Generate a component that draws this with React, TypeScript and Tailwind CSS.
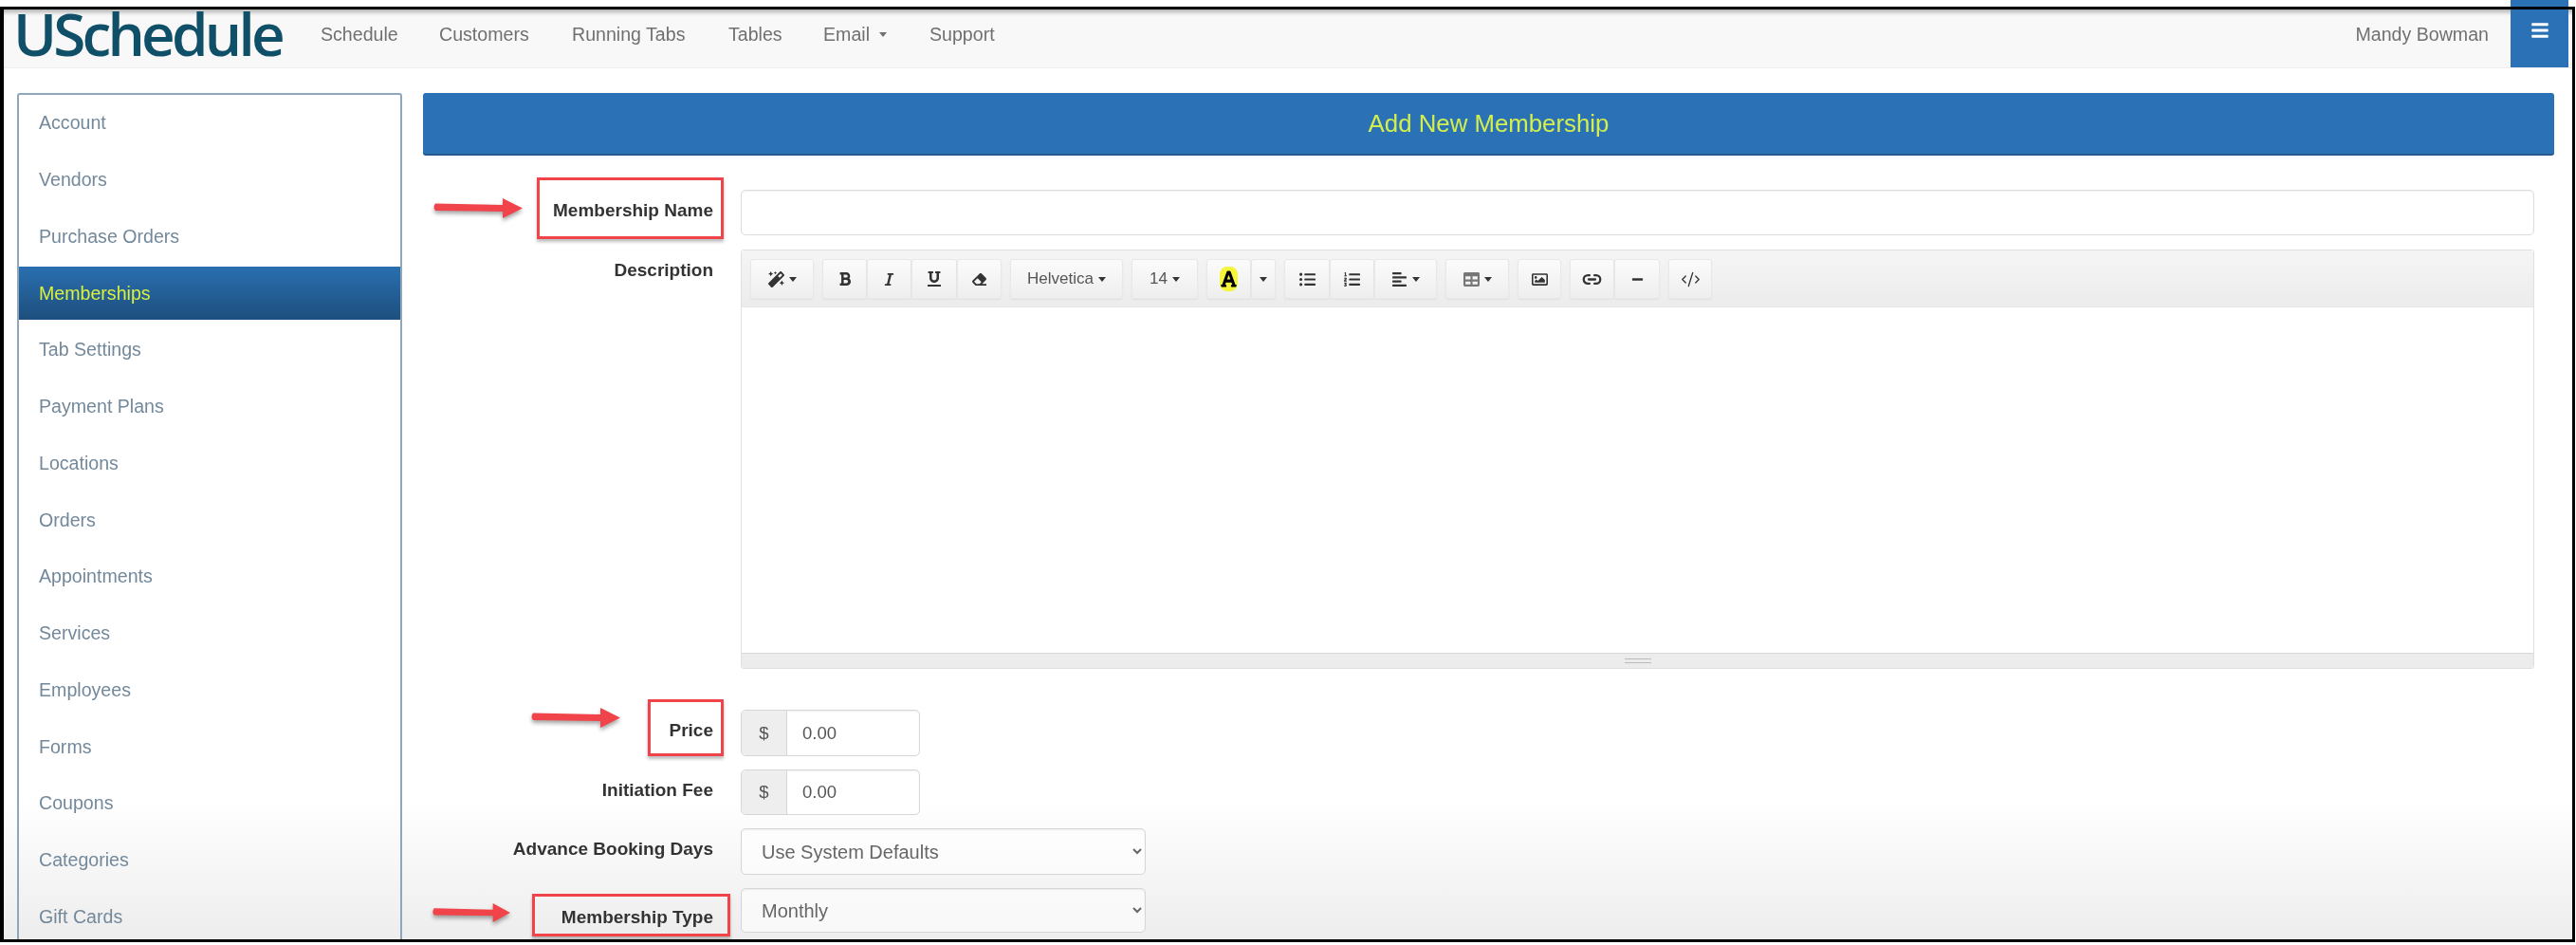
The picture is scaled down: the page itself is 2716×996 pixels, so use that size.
import React from 'react';
import { Link2, CodeXml } from 'lucide-react';
import {
  FaMagic, FaBold, FaItalic, FaUnderline, FaEraser, FaFont, FaListUl, FaListOl,
  FaAlignLeft, FaTable, FaRegImage, FaMinus, FaBars,
} from 'react-icons/fa';

const sans = "font-['Liberation_Sans',Arial,sans-serif]";

const navLinks = [
  { label: 'Schedule', cls: 'w-[125px]' },
  { label: 'Customers', cls: 'w-[140px]' },
  { label: 'Running Tabs', cls: 'w-[165px]' },
  { label: 'Tables', cls: 'w-[100px]' },
  { label: 'Email', cls: 'w-[112px]', caret: true },
  { label: 'Support', cls: 'w-[100px]' },
];

const sideItems = [
  'Account', 'Vendors', 'Purchase Orders', 'Memberships', 'Tab Settings', 'Payment Plans', 'Locations', 'Orders',
  'Appointments', 'Services', 'Employees', 'Forms', 'Coupons', 'Categories', 'Gift Cards',
];

function Caret() {
  return <span className="inline-block w-0 h-0 border-x-[4px] border-x-transparent border-t-[5px] border-t-current" />;
}

function Btn({ w, children }: { w: string; children: React.ReactNode }) {
  return (
    <div className={`${w} h-full flex items-center justify-center gap-[5px] text-[#333] bg-gradient-to-b from-[#fbfbfb] to-[#eeeeee] border border-[#e8e8e8] rounded-[3px] shadow-[0_1px_2px_rgba(0,0,0,0.06)]`}>
      {children}
    </div>
  );
}

function Toolbar() {
  return (
    <div className="h-[60px] flex gap-[9px] pl-[9px] pt-[9px] pb-[8px] bg-gradient-to-b from-[#f5f5f5] to-[#ececec] border-b border-[#e6e6e6]">
      <Btn w="w-[67px]"><FaMagic size={17} /><Caret /></Btn>
      <div className="flex">
        <Btn w="w-[47px]"><FaBold size={16} /></Btn>
        <Btn w="w-[47px]"><FaItalic size={15} /></Btn>
        <Btn w="w-[48px]"><FaUnderline size={16} /></Btn>
        <Btn w="w-[47px]"><FaEraser size={15} /></Btn>
      </div>
      <Btn w="w-[119px]"><span className="text-[17px] text-[#555]">Helvetica</span><Caret /></Btn>
      <Btn w="w-[70px]"><span className="text-[17px] text-[#555]">14</span><Caret /></Btn>
      <div className="flex">
        <Btn w="w-[47px]"><FaFont className="bg-[#f5f53c] rounded-[8px] px-[1px] w-[19px] h-[26px] text-black" /></Btn>
        <Btn w="w-[26px]"><Caret /></Btn>
      </div>
      <div className="flex">
        <Btn w="w-[48px]"><FaListUl size={17} /></Btn>
        <Btn w="w-[47px]"><FaListOl size={17} /></Btn>
        <Btn w="w-[66px]"><FaAlignLeft size={17} /><Caret /></Btn>
      </div>
      <Btn w="w-[67px]"><FaTable size={17} className="text-[#777]" /><Caret /></Btn>
      <Btn w="w-[46px]"><FaRegImage size={17} /></Btn>
      <div className="flex">
        <Btn w="w-[47px]"><Link2 size={21} strokeWidth={2.6} /></Btn>
        <Btn w="w-[48px]"><FaMinus size={13} /></Btn>
      </div>
      <Btn w="w-[46px]"><CodeXml size={21} strokeWidth={1.5} /></Btn>
    </div>
  );
}

function Row({ label, mt, labelPt, children }: { label: string; mt: string; labelPt: string; children: React.ReactNode }) {
  return (
    <div className={`flex ${mt}`}>
      <label className={`w-[306px] ${labelPt} text-right text-[19px] leading-[26px] font-bold text-[#333]`}>{label}</label>
      <div className="flex-1 ml-[29px]">{children}</div>
    </div>
  );
}

function Money({ h }: { h: string }) {
  return (
    <div className={`flex ${h} w-[189px] border border-[#d6d6d6] rounded-[5px] overflow-hidden bg-white shadow-[inset_0_1px_2px_rgba(0,0,0,0.06)]`}>
      <span className="w-[48px] flex items-center justify-center bg-[#eeeeee] border-r border-[#d6d6d6] text-[18.5px] text-[#555]">$</span>
      <input defaultValue="0.00" className="w-[130px] pl-[16px] text-[18.5px] text-[#555] outline-none bg-transparent" />
    </div>
  );
}

function Select({ h, value }: { h: string; value: string }) {
  return (
    <select defaultValue={value} className={`${h} w-[427px] pl-[17px] pr-[8px] text-[20px] text-[#666] bg-white/60 border border-[#d6d6d6] rounded-[5px] shadow-[inset_0_1px_2px_rgba(0,0,0,0.06)] outline-none`}>
      <option>{value}</option>
    </select>
  );
}

function Arrow({ cls }: { cls: string }) {
  return (
    <svg viewBox="0 0 95 21" preserveAspectRatio="none" className={`absolute ${cls} drop-shadow-[0_3px_2px_rgba(0,0,0,0.35)]`}>
      <path d="M3 5.5 L74 7 L74 0 L95 10.5 L74 21 L74 14 L3 13 Q0 9.5 3 5.5 Z" fill="#f0444a" />
    </svg>
  );
}

export default function App() {
  return (
    <div className={`relative w-[2716px] h-[996px] overflow-hidden bg-white pt-[7px] blur-[0.6px] ${sans}`}>
      <div className="h-[986px] mr-[1px] border-[3px] border-l-[4px] border-black bg-gradient-to-b from-white from-85% to-[#ededed] flex flex-col">
        <nav className="h-[62px] shrink-0 flex items-start bg-[#f8f8f8] shadow-[inset_0_5px_4px_-2px_rgba(0,0,0,0.28)] border-b border-[#efefef]">
          <div className="w-[334px] pl-[10px] text-[62px] leading-[50px] tracking-[-3.8px] font-semibold text-[#0f4f68] font-['Open_Sans',sans-serif]">
            USchedule
          </div>
          {navLinks.map(n => (
            <a key={n.label} className={`${n.cls} mt-[14px] flex items-center gap-[10px] text-[19.6px] leading-[24px] text-[#707070]`}>
              {n.label}
              {n.caret && <Caret />}
            </a>
          ))}
          <span className="ml-auto mr-[88px] mt-[14px] text-[19.6px] leading-[24px] text-[#707070]">Mandy Bowman</span>
        </nav>

        <div className="flex flex-1 min-h-0 pt-[26px] pl-[14px] pr-[19px] gap-[22px]">
          <aside className="w-[406px] shrink-0 border-2 border-b-0 border-[#8fa7bd] rounded-t-[3px] overflow-hidden">
            {sideItems.map(item => (
              <div
                key={item}
                className={item === 'Memberships'
                  ? 'h-[56px] my-[2px] flex items-center pl-[21px] text-[19.6px] text-[#d9f03f] bg-gradient-to-b from-[#2a6fb0] to-[#1d4f7e]'
                  : 'h-[59.75px] flex items-center pl-[21px] text-[19.6px] text-[#73899b]'}
              >
                {item}
              </div>
            ))}
          </aside>

          <main className="flex-1 min-w-0">
            <div className="h-[66px] flex items-center justify-center bg-[#2a72b5] rounded-[3px] border-b-2 border-[#23598c] text-[25.8px] text-[#d4ee4e]">
              Add New Membership
            </div>
            <div className="pr-[21px]">
              <Row label="Membership Name" mt="mt-[36px]" labelPt="pt-[9px]">
                <input className="block w-full h-[48px] border border-[#dcdcdc] rounded-[5px] bg-white shadow-[inset_0_1px_2px_rgba(0,0,0,0.05)]" />
              </Row>
              <Row label="Description" mt="mt-[15px]" labelPt="pt-[9px]">
                <div className="h-[442px] flex flex-col border border-[#e0e0e0] rounded-[3px]">
                  <Toolbar />
                  <div className="flex-1 bg-white" />
                  <div className="h-[16px] flex items-center justify-center bg-[#ececec] border-t border-[#d8d8d8]">
                    <div className="w-[28px] h-[5px] border-y border-[#bbbbbb]" />
                  </div>
                </div>
              </Row>
              <Row label="Price" mt="mt-[43px]" labelPt="pt-[9px]">
                <Money h="h-[49px]" />
              </Row>
              <Row label="Initiation Fee" mt="mt-[14px]" labelPt="pt-[9px]">
                <Money h="h-[48px]" />
              </Row>
              <Row label="Advance Booking Days" mt="mt-[14px]" labelPt="pt-[9px]">
                <Select h="h-[49px]" value="Use System Defaults" />
              </Row>
              <Row label="Membership Type" mt="mt-[14px]" labelPt="pt-[18px]">
                <Select h="h-[47px]" value="Monthly" />
              </Row>
            </div>
          </main>
        </div>
      </div>

      {/* hamburger sits above the frame line */}
      <div className="absolute left-[2647px] top-0 w-[61px] h-[7px] bg-[#2a72b5]" />
      <div className="absolute left-[2647px] top-[10px] w-[61px] h-[61px] bg-[#2a72b5] flex items-start justify-center pt-[12px] text-white">
        <FaBars size={20} />
      </div>

      {/* red annotation boxes */}
      <div className="absolute left-[566px] top-[187px] w-[197px] h-[65px] border-[3px] border-[#f0444a] shadow-[0_3px_3px_rgba(0,0,0,0.25)]" />
      <div className="absolute left-[683px] top-[737px] w-[80px] h-[60px] border-[3px] border-[#f0444a] shadow-[0_3px_3px_rgba(0,0,0,0.25)]" />
      <div className="absolute left-[561px] top-[942px] w-[209px] h-[45px] border-[3px] border-[#f0444a] shadow-[0_3px_3px_rgba(0,0,0,0.25)]" />
      <Arrow cls="left-[456px] top-[209px] w-[95px] h-[21px]" />
      <Arrow cls="left-[559px] top-[746px] w-[95px] h-[21px]" />
      <Arrow cls="left-[455px] top-[952px] w-[83px] h-[20px]" />
    </div>
  );
}
